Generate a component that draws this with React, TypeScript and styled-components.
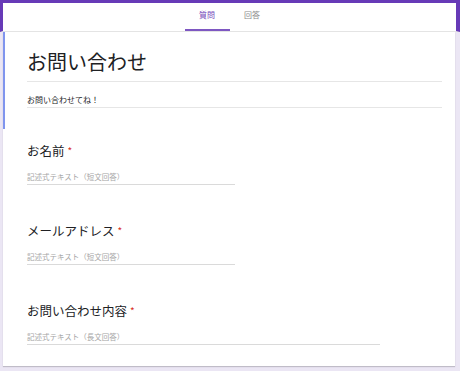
import styled, { createGlobalStyle } from "styled-components";

// Google フォーム風の問い合わせフォーム（編集画面）
const GlobalStyle = createGlobalStyle`
  html, body {
    margin: 0;
    padding: 0;
    background-color: #ebe6f4;
  }
  body {
    font-family: "Noto Sans CJK JP", "Noto Sans", sans-serif;
    color: #202124;
  }
`;

interface Question {
  label: string;
  placeholder: string;
  long?: boolean;
}

const questions: Question[] = [
  { label: "お名前", placeholder: "記述式テキスト（短文回答）" },
  { label: "メールアドレス", placeholder: "記述式テキスト（短文回答）" },
  { label: "お問い合わせ内容", placeholder: "記述式テキスト（長文回答）", long: true },
];

const App = () => {
  return (
    <Frame>
      <GlobalStyle />
      <Header>
        <Tab $active>質問</Tab>
        <Tab>回答</Tab>
      </Header>
      <Card>
        <TitleSection>
          <FormTitle>お問い合わせ</FormTitle>
          <FormDescription>お問い合わせてね！</FormDescription>
        </TitleSection>
        {questions.map((q) => (
          <QuestionBlock key={q.label}>
            <QuestionLabel>
              {q.label}
              <Required>*</Required>
            </QuestionLabel>
            <AnswerField $long={q.long}>{q.placeholder}</AnswerField>
          </QuestionBlock>
        ))}
      </Card>
    </Frame>
  );
};

// 全体
const Frame = styled.div`
  width: 460px;
  height: 371px;
  display: flex;
  flex-direction: column;
  overflow: hidden;
`;

// 上部のタブバー
const Header = styled.div`
  height: 28px;
  display: flex;
  justify-content: center;
  align-items: stretch;
  background-color: #ffffff;
  border-top: 3px solid #673ab7;
  border-left: 3px solid #673ab7;
  border-right: 4px solid #673ab7;
  border-bottom: 1px solid #e4e4e4;
`;

const Tab = styled.div<{ $active?: boolean }>`
  width: 45px;
  display: flex;
  align-items: center;
  justify-content: center;
  font-size: 8px;
  color: ${({ $active }) => ($active ? "#7248b9" : "#8a8a8a")};
  border-bottom: 2px solid ${({ $active }) => ($active ? "#7e57c2" : "transparent")};
  padding-bottom: 3px;
  box-sizing: border-box;
`;

// フォーム本体
const Card = styled.div`
  margin: 0 5px 0 3px;
  height: 334px;
  background-color: #ffffff;
  box-shadow: 0 1px 1px rgba(0, 0, 0, 0.18);
`;

const TitleSection = styled.div`
  border-left: 2px solid #8095ee;
  padding: 18px 13px 21px 22px;
`;

const FormTitle = styled.div`
  font-size: 20px;
  line-height: 24px;
  padding-bottom: 7px;
  border-bottom: 1px solid #e6e6e6;
`;

const FormDescription = styled.div`
  margin-top: 12px;
  font-size: 8px;
  line-height: 12px;
  padding-bottom: 1px;
  border-bottom: 1px solid #e6e6e6;
`;

const QuestionBlock = styled.div`
  padding: 14px 0 24px 24px;
  display: flex;
  flex-direction: column;
  align-items: flex-start;
`;

const QuestionLabel = styled.div`
  font-size: 12.5px;
  line-height: 16px;
  color: #202124;
`;

const Required = styled.span`
  color: #d93025;
  margin-left: 3px;
  font-size: 10px;
  vertical-align: top;
`;

const AnswerField = styled.div<{ $long?: boolean }>`
  margin-top: 13px;
  width: ${({ $long }) => ($long ? "353px" : "208px")};
  font-size: 7.5px;
  line-height: 10px;
  padding-bottom: 2px;
  color: #a5a5a5;
  border-bottom: 1px solid #dadada;
`;

export default App;
